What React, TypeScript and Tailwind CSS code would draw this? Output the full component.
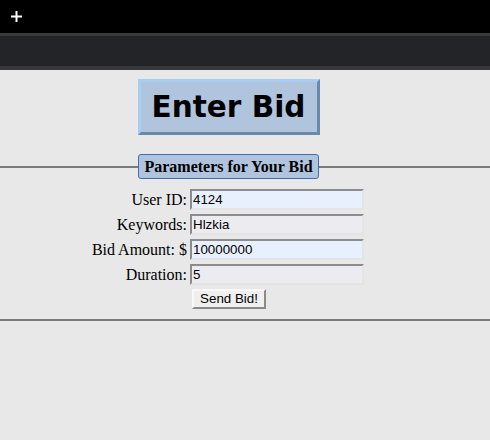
import React from 'react';

const fields = [
  { label: 'User ID:', value: '4124', autofill: true },
  { label: 'Keywords:', value: 'Hlzkia', autofill: false },
  { label: 'Bid Amount: $', value: '10000000', autofill: true },
  { label: 'Duration:', value: '5', autofill: false },
];

export default function App() {
  return (
    <div className="min-h-[440px] w-[490px] bg-[#e8e8e8]">
      {/* Top bar */}
      <div className="flex h-[33px] items-center bg-black pl-[10px]">
        <svg width="13" height="13" viewBox="0 0 13 13">
          <path d="M6.5 1v11M1 6.5h11" stroke="#fff" strokeWidth="2" />
        </svg>
      </div>
      <div className="h-[3px] bg-[#3a3a3a]" />
      <div className="h-[30px] bg-[#232428]" />
      <div className="h-[4px] bg-[#38383b]" />

      {/* Heading */}
      <div className="flex w-[457px] justify-center pt-[9px]">
        <h1 className="flex h-[56px] w-[182px] items-center justify-center border-[3px] border-t-[#a7cdf2] border-l-[#a7cdf2] border-b-[#6a8aab] border-r-[#6a8aab] bg-[#b0c4de] font-['DejaVu_Sans',sans-serif] text-[29.5px] font-bold text-black">
          Enter Bid
        </h1>
      </div>

      {/* Fieldset */}
      <div className="mt-[19px]">
        <div className="relative h-[25px]">
          <div className="absolute left-0 right-0 top-[12px] h-[2px] bg-[#7a7a7a]" />
          <div className="flex w-[457px] justify-center">
            <div className="relative flex h-[25px] w-[181px] items-center justify-center rounded-[3px] border-[1.5px] border-[#3f6cb8] bg-[#b0c4de] font-['Liberation_Serif',serif] text-[16px] font-bold text-black">
              Parameters for Your Bid
            </div>
          </div>
        </div>

        <div className="flex w-[454px] justify-center pt-[10px]">
          <div className="flex flex-col gap-[4px]">
            {fields.map((f) => (
              <div key={f.label} className="flex h-[21px] items-center">
                <span className="w-[100px] whitespace-nowrap pr-[3px] text-right font-['Liberation_Serif',serif] text-[16px] leading-[21px] text-black">
                  {f.label}
                </span>
                <div
                  className={`flex h-[21px] w-[174px] items-center border-2 border-t-[#8c8c8c] border-l-[#8c8c8c] border-b-[#e4e4e4] border-r-[#e4e4e4] pl-[1px] font-['Liberation_Sans',sans-serif] text-[13.33px] leading-none text-black ${
                    f.autofill ? 'bg-[#e8f0fe]' : 'bg-[#ececf0]'
                  }`}
                >
                  {f.value}
                </div>
              </div>
            ))}
            <div className="flex pl-[102px]">
              <button className="h-[20px] w-[74px] border-2 border-t-[#f8f8f8] border-l-[#f8f8f8] border-b-[#8a8a8a] border-r-[#8a8a8a] bg-[#efefef] font-['Liberation_Sans',sans-serif] text-[13.33px] leading-none text-black">
                Send Bid!
              </button>
            </div>
          </div>
        </div>

        <div className="mt-[10px] h-[2px] bg-[#7a7a7a]" />
      </div>
    </div>
  );
}
